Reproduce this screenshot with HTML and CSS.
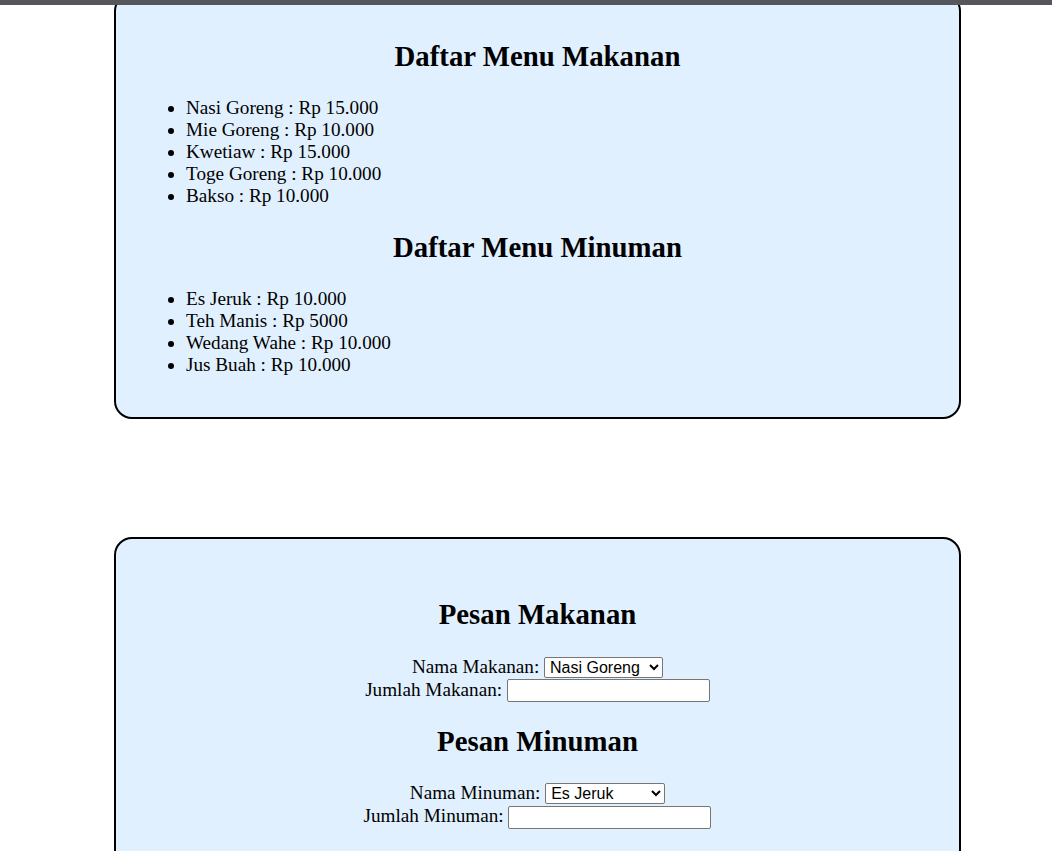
FILE: index.html
```html
<!DOCTYPE html>
<html lang="id">
<head>
<meta charset="utf-8">
<title>Menu</title>
<link rel="stylesheet" href="styles.css">
</head>
<body>
<div class="topbar"></div>
<main class="page">
  <section class="card menu">
    <h2>Daftar Menu Makanan</h2>
    <ul>
      <li>Nasi Goreng : Rp 15.000</li>
      <li>Mie Goreng : Rp 10.000</li>
      <li>Kwetiaw : Rp 15.000</li>
      <li>Toge Goreng : Rp 10.000</li>
      <li>Bakso : Rp 10.000</li>
    </ul>
    <h2>Daftar Menu Minuman</h2>
    <ul>
      <li>Es Jeruk : Rp 10.000</li>
      <li>Teh Manis : Rp 5000</li>
      <li>Wedang Wahe : Rp 10.000</li>
      <li>Jus Buah : Rp 10.000</li>
    </ul>
  </section>

  <section class="card order">
    <form class="order-form">
      <h2>Pesan Makanan</h2>
      <div class="row"><label for="makanan">Nama Makanan:</label> <select id="makanan" class="pick pick-food">
        <option>Nasi Goreng</option>
        <option>Mie Goreng</option>
        <option>Kwetiaw</option>
        <option>Toge Goreng</option>
        <option>Bakso</option>
      </select></div>
      <div class="row"><label for="jml-makanan">Jumlah Makanan:</label> <input id="jml-makanan" class="qty" type="text"></div>
      <h2 class="h-drink">Pesan Minuman</h2>
      <div class="row"><label for="minuman">Nama Minuman:</label> <select id="minuman" class="pick pick-drink">
        <option>Es Jeruk</option>
        <option>Teh Manis</option>
        <option>Wedang Wahe</option>
        <option>Jus Buah</option>
      </select></div>
      <div class="row"><label for="jml-minuman">Jumlah Minuman:</label> <input id="jml-minuman" class="qty" type="text"></div>
    </form>
  </section>
</main>
</body>
</html>
```

FILE: styles.css
```css
html, body {
  margin: 0;
  padding: 0;
  background: #ffffff;
}

body {
  font-family: "Liberation Serif", "Times New Roman", serif;
  font-size: 19.2px;
  color: #000000;
}

.topbar {
  position: fixed;
  top: 0;
  left: 0;
  right: 0;
  height: 5px;
  background: #55575d;
  z-index: 10;
}

.page {
  padding-left: 114px;
  padding-bottom: 60px;
}

.card {
  box-sizing: border-box;
  width: 847px;
  background: #e1f0ff;
  border: 2px solid #000000;
  border-radius: 18px;
  padding: 21px;
}

.menu {
  margin-top: -7px;
  padding-bottom: 22px;
}

.order {
  margin-top: 118px;
  padding-top: 35px;
  padding-bottom: 80px;
}

h2 {
  font-size: 28.8px;
  font-weight: bold;
  text-align: center;
  margin: 23.9px 0;
  line-height: normal;
}

.h-drink {
  margin-top: 23px;
  margin-bottom: 23px;
}

ul {
  margin: 19.2px 0;
  padding-left: 49px;
}

li {
  line-height: normal;
}

.order-form {
  text-align: center;
  margin: 0;
}

.row {
  line-height: 23px;
}

.pick {
  font-family: "Liberation Sans", Arial, sans-serif;
  font-size: 16px;
  height: 21px;
  box-sizing: border-box;
  border: 1px solid #767676;
  border-radius: 2px;
  background: #ffffff;
  color: #000000;
  padding: 0 0 0 1px;
  vertical-align: baseline;
}

.pick-food {
  width: 119px;
}

.pick-drink {
  width: 120px;
}

.qty {
  font-family: "Liberation Sans", Arial, sans-serif;
  font-size: 16px;
  width: 203px;
  height: 23px;
  box-sizing: border-box;
  border: 1px solid #767676;
  border-radius: 2px;
  padding: 1px 2px;
  background: #ffffff;
  vertical-align: baseline;
}
```
